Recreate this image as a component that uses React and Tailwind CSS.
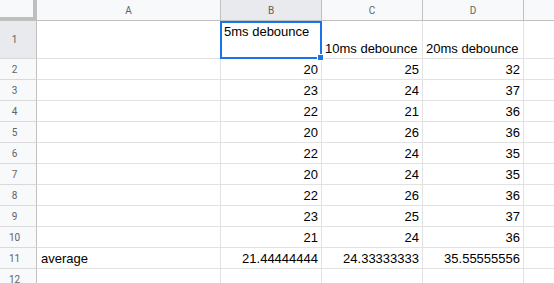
import React from "react";

const cols = [
  { w: 184, label: "A" },
  { w: 101, label: "B" },
  { w: 101, label: "C" },
  { w: 101, label: "D" },
  { w: 30, label: "" },
];

const B = [20, 23, 22, 20, 22, 20, 22, 23, 21];
const C = [25, 24, 21, 26, 24, 24, 26, 25, 24];
const D = [32, 37, 36, 36, 35, 35, 36, 37, 36];

const rows = [
  { h: 38, cells: ["", { t: "5ms debounce", top: true }, { t: "10ms debounce" }, { t: "20ms debounce" }, ""] },
  ...B.map((b, i) => ({
    h: 21,
    cells: ["", { t: String(b), r: true }, { t: String(C[i]), r: true }, { t: String(D[i]), r: true }, ""],
  })),
  {
    h: 21,
    cells: [{ t: "average" }, { t: "21.44444444", r: true }, { t: "24.33333333", r: true }, { t: "35.55555556", r: true }, ""],
  },
  { h: 21, cells: ["", "", "", "", ""] },
];

export default function App() {
  return (
    <div className="relative w-[554px] h-[283px] overflow-hidden bg-white">
      <div className="flex flex-col">
        <div className="flex h-[21px] shrink-0">
          <div className="w-[37px] h-[21px] shrink-0 bg-[#bfbfbf]">
            <div className="w-[33px] h-[17px] bg-[#f8f9fa]" />
          </div>
          {cols.map((c, i) => (
            <div
              key={i}
              style={{ width: c.w }}
              className={`shrink-0 h-[21px] box-border border-b border-[#c0c0c0] flex items-center justify-center text-[10px] text-[#5f6368] font-['Roboto',sans-serif] ${
                i < 4 ? "border-r" : ""
              } ${c.label === "B" ? "bg-[#e8eaed] text-[#3c4043]" : "bg-[#f8f9fa]"}`}
            >
              {c.label}
            </div>
          ))}
        </div>
        {rows.map((row, ri) => (
          <div key={ri} className="flex shrink-0" style={{ height: row.h }}>
            <div
              className={`w-[37px] shrink-0 box-border border-r border-b border-r-[#c0c0c0] border-b-[#d9d9d9] flex items-center justify-center pr-[7px] text-[10px] text-[#5f6368] font-['Roboto',sans-serif] ${
                ri === 0 ? "bg-[#e8eaed]" : "bg-[#f8f9fa]"
              }`}
            >
              {ri + 1}
            </div>
            {cols.map((c, ci) => {
              const cell = row.cells[ci];
              const obj = typeof cell === "object" ? cell : null;
              return (
                <div
                  key={ci}
                  style={{ width: c.w }}
                  className={`shrink-0 box-border border-b border-[#e2e2e3] flex px-[3px] text-[13px] leading-[15px] text-black font-['Liberation_Sans',Arial,sans-serif] whitespace-nowrap ${
                    ci < 4 ? "border-r" : ""
                  } ${obj && obj.top ? "items-start pt-[3px]" : "items-end pb-[2px]"} ${
                    obj && obj.r ? "justify-end" : "justify-start"
                  } ${ci === 0 ? "pl-[4px]" : ""}`}
                >
                  {obj ? obj.t : ""}
                </div>
              );
            })}
          </div>
        ))}
      </div>
      <div className="absolute left-[220px] top-[21px] w-[102px] h-[38px] border-2 border-[#1a73e8] pointer-events-none" />
      <div className="absolute left-[317px] top-[54px] w-[7px] h-[7px] bg-[#1a73e8] border border-white" />
    </div>
  );
}
